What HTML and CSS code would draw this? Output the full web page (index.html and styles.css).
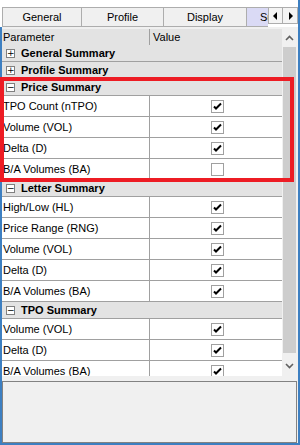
FILE: index.html
```html
<!DOCTYPE html>
<html lang="en">
<head>
    <meta charset="UTF-8">
    <title>Summary settings</title>
    <link rel="stylesheet" href="styles.css">
</head>
<body>
    <div class="window">
        <!-- Tab strip -->
        <div class="tabstrip">
            <div class="tabs">
                <div class="tab tab-general">General</div>
                <div class="tab tab-profile">Profile</div>
                <div class="tab tab-display">Display</div>
                <div class="tab tab-summary active">Summary</div>
            </div>
            <div class="tab-arrows">
                <button class="tab-arrow">
                    <svg width="5" height="8" viewBox="0 0 5 8"><path d="M4 0v8L0 4z" fill="#000"/></svg>
                </button>
                <button class="tab-arrow">
                    <svg width="5" height="8" viewBox="0 0 5 8"><path d="M1 0v8l4-4z" fill="#000"/></svg>
                </button>
            </div>
        </div>

        <div class="panel">
            <div class="grid-area">
                <div class="grid">
                    <div class="grid-header">
                        <div class="cell-name">Parameter</div>
                        <div class="cell-value">Value</div>
                    </div>

                    <div class="category"><span class="toggle">+</span>General Summary</div>
                    <div class="category"><span class="toggle">+</span>Profile Summary</div>

                    <div class="category"><span class="toggle">&minus;</span>Price Summary</div>
                    <div class="row"><div class="cell-name">TPO Count (nTPO)</div><div class="cell-value"><span class="check on"></span></div></div>
                    <div class="row"><div class="cell-name">Volume (VOL)</div><div class="cell-value"><span class="check on"></span></div></div>
                    <div class="row"><div class="cell-name">Delta (D)</div><div class="cell-value"><span class="check on"></span></div></div>
                    <div class="row"><div class="cell-name">B/A Volumes (BA)</div><div class="cell-value"><span class="check"></span></div></div>

                    <div class="category"><span class="toggle">&minus;</span>Letter Summary</div>
                    <div class="row"><div class="cell-name">High/Low (HL)</div><div class="cell-value"><span class="check on"></span></div></div>
                    <div class="row"><div class="cell-name">Price Range (RNG)</div><div class="cell-value"><span class="check on"></span></div></div>
                    <div class="row"><div class="cell-name">Volume (VOL)</div><div class="cell-value"><span class="check on"></span></div></div>
                    <div class="row"><div class="cell-name">Delta (D)</div><div class="cell-value"><span class="check on"></span></div></div>
                    <div class="row"><div class="cell-name">B/A Volumes (BA)</div><div class="cell-value"><span class="check on"></span></div></div>

                    <div class="category"><span class="toggle">&minus;</span>TPO Summary</div>
                    <div class="row"><div class="cell-name">Volume (VOL)</div><div class="cell-value"><span class="check on"></span></div></div>
                    <div class="row"><div class="cell-name">Delta (D)</div><div class="cell-value"><span class="check on"></span></div></div>
                    <div class="row"><div class="cell-name">B/A Volumes (BA)</div><div class="cell-value"><span class="check on"></span></div></div>
                </div>

                <div class="vscroll">
                    <div class="vscroll-btn">
                        <svg width="9" height="6" viewBox="0 0 9 6"><path d="M1 5l3.5-3.5L8 5" fill="none" stroke="#606060" stroke-width="1.6"/></svg>
                    </div>
                    <div class="vscroll-thumb"></div>
                    <div class="vscroll-btn">
                        <svg width="9" height="6" viewBox="0 0 9 6"><path d="M1 1l3.5 3.5L8 1" fill="none" stroke="#606060" stroke-width="1.6"/></svg>
                    </div>
                </div>
            </div>

            <!-- Description box under the grid -->
            <div class="description"></div>
        </div>

        <!-- Red annotation frame -->
        <div class="highlight"></div>
    </div>
</body>
</html>
```

FILE: styles.css
```css
:root {
    --frame-blue: #3d7fc1;
    --line: #a0a0a0;
    --band: #e3e3e3;
    --panel: #f0f0f0;
    --mark-red: #ed1c24;
}

body {
    margin: 0;
    font-family: 'Liberation Sans', Arial, sans-serif;
    font-size: 11px;
    color: #000;
    background: #fff;
}

.window {
    position: relative;
    width: 300px;
    height: 445px;
    box-sizing: border-box;
    border-right: 2px solid var(--frame-blue);
    padding-top: 7px;
    overflow: hidden;
}

/* Tabs */
.tabstrip {
    display: flex;
    height: 20px;
    padding-left: 2px;
}

.tabs {
    display: flex;
    flex: 1;
    overflow: hidden;
}

.tab {
    flex: none;
    box-sizing: border-box;
    height: 20px;
    line-height: 18px;
    text-align: center;
    background: var(--panel);
    border: 1px solid #adadad;
    border-left: none;
}

.tab-general {
    width: 80px;
    border-left: 1px solid #adadad;
}

.tab-profile {
    width: 82px;
}

.tab-display {
    width: 83px;
}

.tab-summary {
    width: 80px;
    padding-left: 13px;
    text-align: left;
}

.tab.active {
    background: #dadaf5;
}

.tab-arrows {
    display: flex;
}

.tab-arrow {
    width: 15px;
    height: 17px;
    padding: 0;
    margin: 0;
    border: 1px solid #adadad;
    background: #f4f4f4;
    display: flex;
    align-items: center;
    justify-content: center;
}

.tab-arrow + .tab-arrow {
    border-left: none;
}

/* Panel */
.panel {
    height: 418px;
    box-sizing: border-box;
    background: var(--panel);
    border-left: 2px solid var(--frame-blue);
    border-bottom: 2px solid var(--frame-blue);
    padding: 2px 1px 0 0;
}

.grid-area {
    display: flex;
    height: 347px;
}

.grid {
    width: 280px;
    overflow: hidden;
    background: #fff;
}

.grid-header {
    display: flex;
    height: 16px;
    line-height: 16px;
    background: var(--band);
}

.cell-name {
    width: 148px;
    padding-left: 1px;
    box-sizing: border-box;
    border-right: 1px solid var(--line);
    white-space: nowrap;
    overflow: hidden;
}

.cell-value {
    flex: 1;
    padding-left: 3px;
}

.category {
    height: 16px;
    line-height: 16px;
    background: var(--band);
    border-bottom: 1px solid var(--line);
    font-weight: bold;
    display: flex;
    align-items: center;
    white-space: nowrap;
}

.toggle {
    width: 9px;
    height: 9px;
    box-sizing: border-box;
    margin: 0 6px 0 4px;
    border: 1px solid #808080;
    background: #fff;
    font-weight: normal;
    font-size: 9px;
    line-height: 6px;
    text-align: center;
    font-family: 'DejaVu Sans', sans-serif;
}

.row {
    display: flex;
    height: 20px;
    line-height: 20px;
    border-bottom: 1px solid var(--line);
}

.row .cell-value {
    display: flex;
    align-items: center;
    justify-content: center;
    padding: 0 0 0 2px;
}

.check {
    width: 13px;
    height: 13px;
    box-sizing: border-box;
    border: 1px solid var(--line);
    background: #fff no-repeat center;
}

.check.on {
    background-image: url("data:image/svg+xml,%3Csvg xmlns='http://www.w3.org/2000/svg' width='11' height='11' viewBox='0 0 11 11'%3E%3Cpath d='M2 5.5l2 2 5-5' fill='none' stroke='%23000' stroke-width='2'/%3E%3C/svg%3E");
}

/* Vertical scrollbar */
.vscroll {
    width: 15px;
    display: flex;
    flex-direction: column;
    background: var(--panel);
}

.vscroll-btn {
    height: 17px;
    display: flex;
    align-items: center;
    justify-content: center;
}

.vscroll-btn:last-child {
    margin-top: auto;
    height: 20px;
}

.vscroll-thumb {
    height: 306px;
    margin: 1px 1px 0;
    background: #cdcdcd;
}

.description {
    height: 62px;
    margin-top: 5px;
    box-sizing: border-box;
    border: 1px solid #828282;
}

/* Annotation drawn over the grid */
.highlight {
    position: absolute;
    left: 0;
    top: 77px;
    width: 294px;
    height: 105px;
    box-sizing: border-box;
    border: 4px solid var(--mark-red);
}
```
